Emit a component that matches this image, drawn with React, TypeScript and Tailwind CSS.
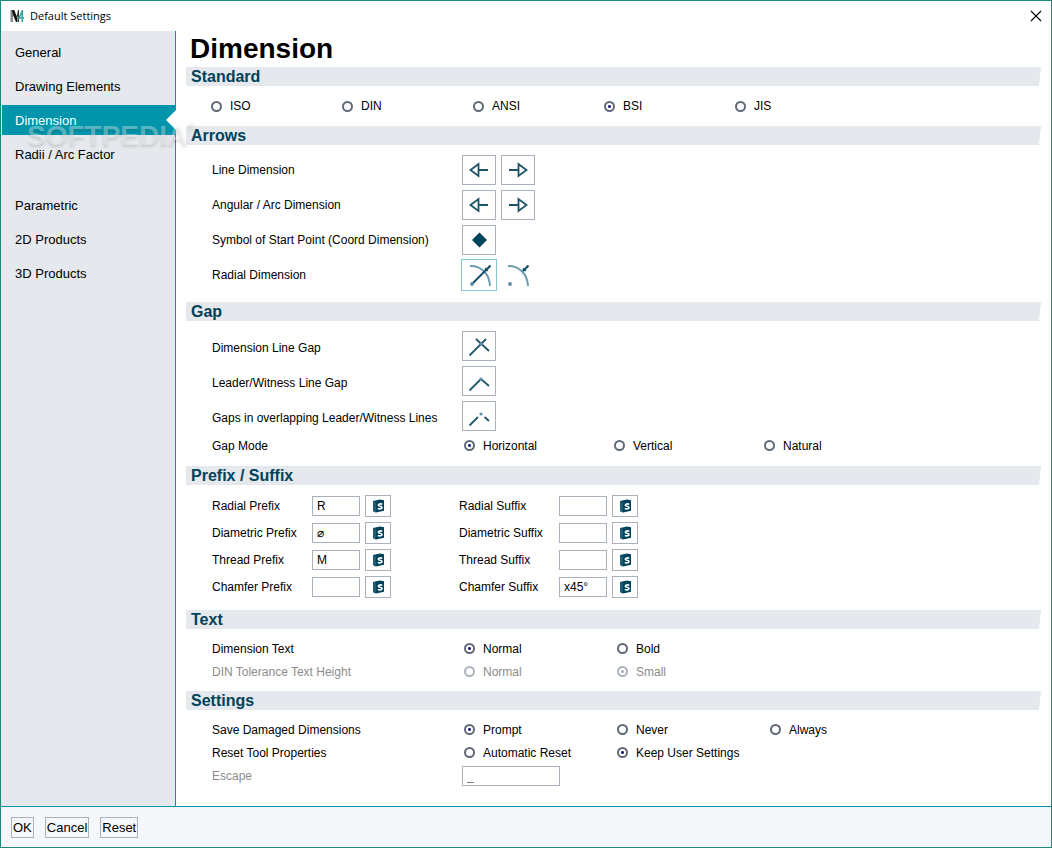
import { useState, type ReactNode } from 'react';

const NAV_GROUPS = [
  ['General', 'Drawing Elements', 'Dimension', 'Radii / Arc Factor'],
  ['Parametric', '2D Products', '3D Products'],
];

const AFFIXES = [
  { name: 'Radial', prefix: 'R', suffix: '' },
  { name: 'Diametric', prefix: '⌀', suffix: '' },
  { name: 'Thread', prefix: 'M', suffix: '' },
  { name: 'Chamfer', prefix: '', suffix: 'x45°' },
];

function Section({ title, children }: { title: string; children: ReactNode }) {
  return (
    <section>
      <h2 className="h-[19px] bg-[#e5e8ed] pl-[5px] text-base leading-[19px] font-bold text-[#00425a] [clip-path:polygon(0_0,100%_0,calc(100%-2px)_100%,0_100%)]">
        {title}
      </h2>
      {children}
    </section>
  );
}

interface RadioGroupProps {
  name: string;
  options: string[];
  initial: string;
  itemClass: string;
  disabled?: boolean;
}

function RadioGroup({ name, options, initial, itemClass, disabled }: RadioGroupProps) {
  const [value, setValue] = useState(initial);
  return (
    <div role="radiogroup" aria-label={name} className="flex">
      {options.map((option) => (
        <label key={option} className={`flex shrink-0 items-center gap-2 whitespace-nowrap ${itemClass} ${disabled ? 'text-[#8c8c8c]' : ''}`}>
          <input
            type="radio"
            name={name}
            checked={value === option}
            disabled={disabled}
            onChange={() => setValue(option)}
            className="size-[11px] shrink-0 appearance-none rounded-full border-2 border-[#5f6977] bg-white checked:bg-[radial-gradient(circle,#1c1c78_0_1px,transparent_2px)] disabled:border-[#abb1bd] disabled:checked:bg-[radial-gradient(circle,#abb1bd_0_1px,transparent_2px)]"
          />
          {option}
        </label>
      ))}
    </div>
  );
}

function Row({ label, className = 'h-[23px]', children }: { label: ReactNode; className?: string; children: ReactNode }) {
  return (
    <div className={`flex items-center ${className}`}>
      <div className="w-[250px] shrink-0 whitespace-nowrap">{label}</div>
      {children}
    </div>
  );
}

function IconButton({ label, children }: { label: string; children: ReactNode }) {
  return (
    <button type="button" aria-label={label} className="flex h-[30px] w-[34px] items-center justify-center border border-[#a9b1bd] bg-white">
      {children}
    </button>
  );
}

function ArrowIcon({ flip }: { flip?: boolean }) {
  return (
    <svg width="20" height="16" viewBox="0 0 20 16" fill="none" stroke="#1b5468" strokeWidth="1.8" className={flip ? 'rotate-180' : ''}>
      <path d="M9.5 2V14L1.5 8ZM9.5 8H19" />
    </svg>
  );
}

function RadialIcon({ line }: { line?: boolean }) {
  return (
    <svg width="24" height="24" viewBox="0 0 24 24" fill="none">
      <path d="M3 3C14 2.5 22.5 11 23 23" stroke="#6c9cb0" strokeWidth="2" />
      {line && <path d="M5 21L18 8" stroke="#0b4a60" strokeWidth="1.8" />}
      <path d="M23.5 2.5L19 7" stroke="#0b4a60" strokeWidth="2" />
      <path d="M17.5 8.5L18 4.5L21.5 8Z" fill="#0b4a60" />
      <circle cx="5" cy="21" r="1.9" fill="#5b8ca4" />
    </svg>
  );
}

function GapIcon({ kind }: { kind: 'cross' | 'corner' | 'open' }) {
  return (
    <svg width="22" height="20" viewBox="0 0 22 20" fill="none" stroke="#24596d" strokeWidth="1.9">
      {kind === 'cross' && <path d="M1.5 19.5L18 3M8 3L21 15" />}
      {kind === 'corner' && <path d="M1.5 19.5L13 8L21 15" />}
      {kind === 'open' && <path d="M1.5 19.5L10 11M16.5 11L21 15" />}
      <circle cx="13" cy="8" r="1.6" fill="#5f93aa" stroke="none" />
    </svg>
  );
}

function SymbolButton({ label }: { label: string }) {
  return (
    <button type="button" aria-label={label} className="ml-[5px] flex h-[22px] w-[26px] items-center justify-center border border-[#a9b1bd] bg-white">
      <svg width="13" height="14" viewBox="0 0 13 14">
        <path d="M1 2L8 0.5L12 1.2V11.8L4 13.5L1 12Z" fill="#00425a" />
        <path d="M1 2L4 3V13.5L1 12Z" fill="#1f5b72" />
        <path d="M10.3 5.2C8.5 4.5 6.3 5 6.3 6.2C6.3 7.6 10 6.7 10 8.4C10 10 7.5 10.2 5.8 9.5" fill="none" stroke="#fff" strokeWidth="1.6" />
      </svg>
    </button>
  );
}

function AffixField({ label, value }: { label: string; value: string }) {
  return (
    <div className="flex items-center">
      <label className="flex items-center">
        <span className="w-[100px] whitespace-nowrap">{label}</span>
        <input defaultValue={value} className="h-5 w-12 border border-[#a9b1bd] bg-white px-1" />
      </label>
      <SymbolButton label={`${label} symbols`} />
    </div>
  );
}

export default function App() {
  const [active, setActive] = useState('Dimension');

  return (
    <div className="relative flex min-h-screen flex-col border border-[#1a8a7a] bg-white font-['Liberation_Sans',Arial,sans-serif] text-xs text-black">
      <header className="flex h-[30px] items-center justify-between px-[9px]">
        <div className="flex items-center gap-1.5">
          <svg width="14" height="13" viewBox="0 0 14 13">
            <path d="M0.5 0H3V12H0.5Z" fill="#8a8a8a" />
            <path d="M2 0H4.2L7 7V12H6L3 5Z" fill="#111" />
            <path d="M6.5 8L8 0H9V12H7.5V6Z" fill="#333" />
            <path d="M12.3 0V12M12.3 1L9 8H14" fill="none" stroke="#35a3a0" strokeWidth="1.6" />
          </svg>
          <span className="font-['Open_Sans',sans-serif] text-[11px]">Default Settings</span>
        </div>
        <button type="button" aria-label="Close">
          <svg width="12" height="12" viewBox="0 0 12 12" stroke="#000" strokeWidth="1.1">
            <path d="M1 1L11 11M11 1L1 11" />
          </svg>
        </button>
      </header>

      <div className="flex grow">
        <nav className="w-[175px] shrink-0 border-r border-[#0095ab] bg-[#e5e8ed] pt-1.5 pl-px text-[13px]">
          {NAV_GROUPS.map((group) => (
            <div key={group[0]} className="mb-[21px] flex flex-col gap-1">
              {group.map((item) => (
                <button
                  key={item}
                  type="button"
                  onClick={() => setActive(item)}
                  className={`relative h-[30px] pt-0.5 pl-[13px] text-left ${item === active ? 'bg-[#0095ab] text-white' : ''}`}
                >
                  {item}
                  {item === active && (
                    <span className="absolute top-[5px] -right-px h-5 w-2.5 bg-white [clip-path:polygon(100%_0,0_50%,100%_100%)]" />
                  )}
                </button>
              ))}
            </div>
          ))}
        </nav>

        <main className="min-w-0 grow px-2.5">
          <h1 className="h-9 pl-1 text-[28px] leading-9 font-bold">Dimension</h1>

          <Section title="Standard">
            <div className="flex h-10 items-center pl-[25px]">
              <RadioGroup name="Standard" options={['ISO', 'DIN', 'ANSI', 'BSI', 'JIS']} initial="BSI" itemClass="w-[131px]" />
            </div>
          </Section>

          <Section title="Arrows">
            <div className="flex flex-col gap-[5px] pt-2.5 pb-3 pl-[26px]">
              {['Line Dimension', 'Angular / Arc Dimension'].map((label) => (
                <Row key={label} label={label} className="h-[30px]">
                  <div className="flex gap-[5px]">
                    <IconButton label={`${label} start arrow`}><ArrowIcon /></IconButton>
                    <IconButton label={`${label} end arrow`}><ArrowIcon flip /></IconButton>
                  </div>
                </Row>
              ))}
              <Row label="Symbol of Start Point (Coord Dimension)" className="h-[30px]">
                <IconButton label="Start point symbol">
                  <svg width="16" height="16" viewBox="0 0 16 16"><path d="M8.5 0.5L16 8L8.5 15.5L1 8Z" fill="#00425a" /></svg>
                </IconButton>
              </Row>
              <Row label="Radial Dimension" className="h-[30px]">
                <div className="-ml-px flex items-center">
                  <button type="button" aria-label="Radial with line" className="flex h-8 w-9 items-center justify-center border border-[#85c5d3]">
                    <RadialIcon line />
                  </button>
                  <button type="button" aria-label="Radial without line" className="flex h-8 w-10 items-center justify-center">
                    <RadialIcon />
                  </button>
                </div>
              </Row>
            </div>
          </Section>

          <Section title="Gap">
            <div className="pt-2.5 pb-[9px] pl-[26px]">
              <div className="flex flex-col gap-[5px] pb-[3px]">
                <Row label={<div className="pt-1">Dimension Line Gap</div>} className="h-[30px]">
                  <IconButton label="Dimension line gap"><GapIcon kind="cross" /></IconButton>
                </Row>
                <Row label={<div className="pt-1">Leader/Witness Line Gap</div>} className="h-[30px]">
                  <IconButton label="Leader line gap"><GapIcon kind="corner" /></IconButton>
                </Row>
                <Row label={<div className="pt-1">Gaps in overlapping Leader/Witness Lines</div>} className="h-[30px]">
                  <IconButton label="Overlapping line gaps"><GapIcon kind="open" /></IconButton>
                </Row>
              </div>
              <Row label="Gap Mode">
                <RadioGroup name="Gap Mode" options={['Horizontal', 'Vertical', 'Natural']} initial="Horizontal" itemClass="w-[150px] pl-0.5" />
              </Row>
            </div>
          </Section>

          <Section title="Prefix / Suffix">
            <div className="flex flex-col gap-[5px] pt-2.5 pb-3 pl-[26px]">
              {AFFIXES.map(({ name, prefix, suffix }) => (
                <div key={name} className="flex gap-[68px]">
                  <AffixField label={`${name} Prefix`} value={prefix} />
                  <AffixField label={`${name} Suffix`} value={suffix} />
                </div>
              ))}
            </div>
          </Section>

          <Section title="Text">
            <div className="py-2 pl-[26px]">
              <Row label="Dimension Text">
                <RadioGroup name="Dimension Text" options={['Normal', 'Bold']} initial="Normal" itemClass="w-[153px] pl-0.5" />
              </Row>
              <Row label={<span className="text-[#8c8c8c]">DIN Tolerance Text Height</span>}>
                <RadioGroup name="DIN Tolerance" options={['Normal', 'Small']} initial="Small" itemClass="w-[153px] pl-0.5" disabled />
              </Row>
            </div>
          </Section>

          <Section title="Settings">
            <div className="pt-2 pb-[19px] pl-[26px]">
              <Row label="Save Damaged Dimensions">
                <RadioGroup name="Save Damaged" options={['Prompt', 'Never', 'Always']} initial="Prompt" itemClass="w-[153px] pl-0.5" />
              </Row>
              <Row label="Reset Tool Properties">
                <RadioGroup name="Reset Tool" options={['Automatic Reset', 'Keep User Settings']} initial="Keep User Settings" itemClass="w-[153px] pl-0.5" />
              </Row>
              <Row label={<label htmlFor="escape" className="text-[#8c8c8c]">Escape</label>}>
                <input id="escape" defaultValue="_" className="h-5 w-[98px] border border-[#a9b1bd] px-1 text-[#6e6e6e]" />
              </Row>
            </div>
          </Section>
        </main>
      </div>

      <footer className="flex h-[41px] items-center gap-[11px] border-t border-[#0095ab] bg-[#f5f7fa] pl-2.5">
        {['OK', 'Cancel', 'Reset'].map((label) => (
          <button key={label} type="button" className="h-[21px] border border-[#a9b1bd] px-px text-[13px] leading-[19px]">
            {label}
          </button>
        ))}
      </footer>

      <div className="pointer-events-none absolute top-[117px] left-[26px] flex items-start font-bold text-white/35 select-none [text-shadow:0_2px_3px_rgb(0_0_0/0.14)]">
        <span className="text-[28px] leading-9">SOFTPEDIA</span>
        <span className="text-[10px] leading-4">®</span>
      </div>
    </div>
  );
}
